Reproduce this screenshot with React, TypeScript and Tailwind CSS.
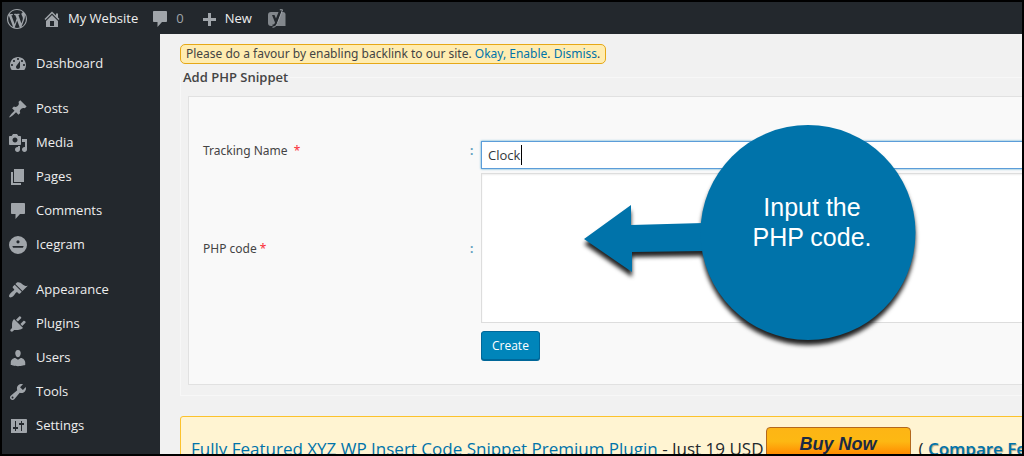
import { useState } from "react";
import type { ReactNode } from "react";

const icons = {
  wordpress:
    "M20 10c0-5.51-4.49-10-10-10C4.48 0 0 4.49 0 10c0 5.52 4.48 10 10 10 5.51 0 10-4.48 10-10zM7.78 15.37L4.37 6.22c.55-.02 1.17-.08 1.17-.08.5-.06.44-1.13-.06-1.11 0 0-1.45.11-2.37.11-.18 0-.37 0-.58-.01C4.12 2.69 6.87 1.11 10 1.11c2.33 0 4.45.87 6.05 2.34-.68-.11-1.65.39-1.65 1.58 0 .74.45 1.36.9 2.1.35.61.55 1.36.55 2.46 0 1.49-1.4 5-1.4 5l-3.03-8.37c.54-.02.82-.17.82-.17.5-.05.44-1.25-.06-1.22 0 0-1.44.12-2.38.12-.87 0-2.33-.12-2.33-.12-.5-.03-.56 1.2-.06 1.22l.92.08 1.26 3.41zM17.41 10c.24-.64.74-1.87.43-4.25.7 1.29 1.05 2.71 1.05 4.25 0 3.29-1.73 6.24-4.4 7.78.97-2.59 1.94-5.2 2.92-7.78zM6.1 18.09C3.12 16.65 1.11 13.53 1.11 10c0-1.3.23-2.48.72-3.59C3.25 10.3 4.67 14.2 6.1 18.09zm4.03-6.63l2.58 6.98c-.86.29-1.76.45-2.71.45-.79 0-1.57-.11-2.29-.33.81-2.38 1.62-4.74 2.42-7.1z",
  home: "M16 8.5l1.53 1.53-1.06 1.06L10 4.6l-6.47 6.49-1.06-1.06L10 2.5l4 4v-2h2v4zm-6-2.46l6 5.99V18H4v-5.97zM12 17v-5H8v5h4z",
  comment:
    "M4 2h12c.55 0 1 .45 1 1v9c0 .55-.45 1-1 1h-4l-4.500 5v-5H4c-.55 0-1-.45-1-1V3c0-.55.45-1 1-1z",
  plus: "M17 9v3h-5v5H9v-5H4V9h5V4h3v5z",
  dashboard:
    "M3.76 16h12.48c1.1-1.37 1.76-3.11 1.76-5 0-4.42-3.58-8-8-8s-8 3.58-8 8c0 1.89.66 3.63 1.76 5zM10 4c.55 0 1 .45 1 1s-.45 1-1 1-1-.45-1-1 .45-1 1-1zM6 6c.55 0 1 .45 1 1s-.45 1-1 1-1-.45-1-1 .45-1 1-1zm8 0c.55 0 1 .45 1 1s-.45 1-1 1-1-.45-1-1 .45-1 1-1zm-5.37 5.55L12 7v6c0 1.1-.9 2-2 2s-2-.9-2-2c0-.57.24-1.08.63-1.45zM4 10c.55 0 1 .45 1 1s-.45 1-1 1-1-.45-1-1 .45-1 1-1zm12 0c.55 0 1 .45 1 1s-.45 1-1 1-1-.45-1-1 .45-1 1-1z",
  post: "M10.44 3.02l1.82-1.82 6.36 6.35-1.83 1.82c-1.05-.68-2.48-.57-3.41.36l-.75.75c-.92.93-1.04 2.35-.35 3.41l-1.83 1.82-2.41-2.41-2.8 2.79c-.42.42-3.38 2.71-3.8 2.29s1.86-3.39 2.28-3.81l2.79-2.79L4.1 9.36l1.83-1.82c1.05.69 2.48.57 3.4-.36l.75-.75c.93-.92 1.05-2.35.36-3.41z",
  media:
    "M13 11V4c0-.55-.45-1-1-1h-1.67L9 1H5L3.67 3H2c-.55 0-1 .45-1 1v7c0 .55.45 1 1 1h10c.55 0 1-.45 1-1zM7 4.5c1.38 0 2.5 1.12 2.5 2.5S8.38 9.5 7 9.5 4.5 8.38 4.5 7 5.62 4.5 7 4.5zM14 6h5v10.5c0 1.38-1.12 2.5-2.5 2.5S14 17.88 14 16.5s1.12-2.5 2.5-2.5c.17 0 .34.02.5.05V9h-3V6zm-4 8.05V13h2v3.5c0 1.38-1.12 2.5-2.5 2.5S7 17.88 7 16.5 8.12 14 9.5 14c.17 0 .34.02.5.05z",
  page: "M6 15V2h10v13H6zm-1 1h8v2H3V5h2v11z",
  icegram:
    "M10 1a9 9 0 1 0 0 18 9 9 0 0 0 0-18zM10 5.2a1.6 1.6 0 1 1 0 3.2 1.6 1.6 0 0 1 0-3.2zM4.500 11h11c0 1.100-.5 1.800-1.200 1.800H5.700c-.7 0-1.200-.7-1.200-1.800z",
  appearance:
    "M14.48 11.06L7.41 3.99l1.5-1.5c.5-.56 2.3-.47 3.51.32 1.21.8 1.43 1.28 2.91 2.1 1.18.64 2.45 1.26 4.45.85zm-.71.71L6.7 4.7 4.93 6.47c-.39.39-.39 1.02 0 1.41l1.06 1.06c.39.39.39 1.03 0 1.42-.6.6-1.43 1.11-2.21 1.69-.35.26-.7.53-1.01.84C1.43 14.23.4 16.08 1.4 17.07c.99 1 2.84-.03 4.18-1.36.31-.31.58-.66.85-1.02.57-.78 1.08-1.61 1.69-2.21.39-.39 1.02-.39 1.41 0l1.06 1.06c.39.39 1.02.39 1.41 0z",
  plugins:
    "M13.11 4.36L9.87 7.6 8 5.73l3.24-3.24c.35-.34 1.05-.2 1.56.32.52.51.66 1.21.31 1.55zm-8 1.77l.91-1.12 9.01 9.01-1.19.84c-.71.71-2.63 1.16-3.82 1.16H6.14L4.9 17.26c-.59.59-1.54.59-2.12 0-.59-.58-.59-1.53 0-2.12l1.24-1.24v-3.88c0-1.13.4-3.19 1.09-3.89zm7.26 3.97l3.24-3.24c.34-.35 1.04-.21 1.55.31.52.51.66 1.21.31 1.55l-3.24 3.25z",
  users:
    "M10 9.25c-2.27 0-2.73-3.44-2.73-3.44C7 4.02 7.82 2 9.97 2c2.16 0 2.98 2.02 2.71 3.81 0 0-.41 3.44-2.68 3.44zm0 2.57L12.72 10c2.39 0 4.52 2.33 4.52 4.53v2.49s-3.65 1.13-7.24 1.13c-3.65 0-7.24-1.13-7.24-1.13v-2.49c0-2.25 1.94-4.48 4.47-4.48z",
  tools:
    "M16.68 9.77c-1.34 1.34-3.3 1.67-4.95.99l-5.41 6.52c-.99.99-2.59.99-3.58 0s-.99-2.59 0-3.57l6.52-5.42c-.68-1.65-.35-3.61.99-4.95 1.28-1.28 3.12-1.62 4.72-1.06l-2.89 2.89 2.82 2.82 2.86-2.87c.53 1.58.18 3.39-1.08 4.65zM3.81 16.21c.4.39 1.04.39 1.43 0 .4-.4.4-1.04 0-1.43-.39-.4-1.03-.4-1.43 0-.39.39-.39 1.03 0 1.43z",
  settings:
    "M3 3h15c.55 0 1 .45 1 1v12c0 .55-.45 1-1 1H3V3zM7 5v6H5v2h2v2h1v-2h2v-2H8V5H7zM13 5v2h-2v2h2v6h1V9h2V7h-2V5h-1z",
};

type IconName = keyof typeof icons;

const menuGroups: { label: string; icon: IconName }[][] = [
  [{ label: "Dashboard", icon: "dashboard" }],
  [
    { label: "Posts", icon: "post" },
    { label: "Media", icon: "media" },
    { label: "Pages", icon: "page" },
    { label: "Comments", icon: "comment" },
    { label: "Icegram", icon: "icegram" },
  ],
  [
    { label: "Appearance", icon: "appearance" },
    { label: "Plugins", icon: "plugins" },
    { label: "Users", icon: "users" },
    { label: "Tools", icon: "tools" },
    { label: "Settings", icon: "settings" },
  ],
];

function Icon({ name }: { name: IconName }) {
  return (
    <svg viewBox="0 0 20 20" className="size-5 shrink-0 fill-[#a0a5aa]" fillRule="evenodd" aria-hidden="true">
      <path d={icons[name]} />
    </svg>
  );
}

function YoastIcon() {
  return (
    <svg viewBox="0 0 20 20" className="size-5 shrink-0" aria-hidden="true">
      <path d="M4 3h12a2.500 2.500 0 0 1 2.500 2.500V17H4a3 3 0 0 1-3-3V6a3 3 0 0 1 3-3z" fill="#82878c" />
      <path d="M15.500 .5h-3L9 9.500 7.500 6H5l3 7.500c-.4 1.400-1 2-2.500 2v2.500c2.800 0 4-1.200 5-3.800z" fill="#23282d" />
      <path d="M12.800 .8h2.700L10.300 14.500c-1 2.500-2.200 3.600-4.800 3.700" fill="none" stroke="#a0a5aa" strokeWidth="1" />
    </svg>
  );
}

function AdminBar() {
  return (
    <header className="flex h-8 shrink-0 items-center bg-[#23282d] pt-px pl-[5px] text-[13px] text-[#eee]">
      <a href="#wp" aria-label="About WordPress">
        <Icon name="wordpress" />
      </a>
      <a href="#site" className="ml-[15px] flex items-center gap-[6px]">
        <Icon name="home" />
        My Website
      </a>
      <a href="#comments" className="ml-3 flex items-center gap-[6px] text-[#a0a5aa]">
        <Icon name="comment" />
        0
      </a>
      <a href="#new" className="ml-[15px] flex items-center gap-[6px]">
        <Icon name="plus" />
        New
      </a>
      <a href="#seo" aria-label="SEO" className="ml-[15px]">
        <YoastIcon />
      </a>
    </header>
  );
}

function Sidebar() {
  return (
    <nav aria-label="Main menu" className="flex w-[158px] shrink-0 flex-col gap-[11px] bg-[#23282d] pt-[13px]">
      {menuGroups.map((group) => (
        <ul key={group[0].label}>
          {group.map((item) => (
            <li key={item.label}>
              <a href="#menu" className="flex h-[34px] items-center gap-2 pl-[6px] text-[13px] text-[#eee]">
                <Icon name={item.icon} />
                {item.label}
              </a>
            </li>
          ))}
        </ul>
      ))}
    </nav>
  );
}

function Row({ id, label, children }: { id: string; label: ReactNode; children: ReactNode }) {
  return (
    <>
      <label htmlFor={id} className="pt-0.5 leading-4 whitespace-pre">
        {label}
      </label>
      <span className="pt-0.5 leading-4 font-bold text-[#5f9fc0]">:</span>
      {children}
    </>
  );
}

function Callout() {
  return (
    <div className="pointer-events-none absolute top-7 left-[394px] h-[215px] w-[333px]">
      <svg
        viewBox="0 0 333 215"
        className="absolute inset-0 size-full overflow-visible fill-[#0073aa] drop-shadow-[0_5px_2px_#000000dd]"
        aria-hidden="true"
      >
        <path d="M1 114L48 80v20l72-2v28l-71 1v20z" />
        <circle cx="225" cy="107.500" r="107.500" />
      </svg>
      <p className="absolute top-[67px] right-0 w-[208px] text-center font-['Liberation_Sans',sans-serif] text-[25px] leading-[30px] text-white">
        Input the
        <br />
        PHP code.
      </p>
    </div>
  );
}

function SnippetForm() {
  const [name, setName] = useState("Clock");
  const [code, setCode] = useState("");

  return (
    <form onSubmit={(e) => e.preventDefault()}>
      <fieldset className="border border-[#f7f7f7] pt-[9px] pb-[10px]">
        <legend className="px-0.5 font-['Open_Sans',sans-serif] text-[13px] leading-5 font-semibold">
          Add PHP Snippet
        </legend>
        <div className="relative ml-[7px] border border-[#e1e1e1] bg-[#f9f9f9] pt-[44px] pb-6 pl-[14px]">
          <div className="grid grid-cols-[267px_11px_1fr] items-start">
            <Row
              id="tracking-name"
              label={
                <>
                  Tracking Name {" "}<span className="text-red-500">*</span>
                </>
              }
            >
              <div className="relative">
                <input
                  id="tracking-name"
                  type="text"
                  value={name}
                  onChange={(e) => setName(e.target.value)}
                  className="block h-7 w-full border border-[#5b9dd9] bg-white px-[6px] font-['Open_Sans',sans-serif] text-[13px] text-[#32373c] shadow-[0_0_2px_#1e8cbecc] outline-none"
                />
                {/* text cursor */}
                <span className="absolute top-1 left-10 h-5 w-px bg-black" />
              </div>
            </Row>
          </div>
          <div className="mt-1 grid grid-cols-[267px_11px_1fr] items-center">
            <Row
              id="php-code"
              label={
                <>
                  PHP code <span className="text-red-500">*</span>
                </>
              }
            >
              <textarea
                id="php-code"
                value={code}
                onChange={(e) => setCode(e.target.value)}
                className="block h-[150px] resize-none border border-[#ddd] bg-white p-[6px] shadow-[inset_0_1px_2px_#00000012] outline-none"
              />
            </Row>
          </div>
          <button
            type="submit"
            className="mt-2 ml-[278px] block h-[29px] rounded-[3px] border border-[#006799] bg-[#0085ba] px-[10px] font-['Open_Sans',sans-serif] font-medium text-white shadow-[0_1px_0_#006799]"
          >
            Create
          </button>
          <Callout />
        </div>
      </fieldset>
    </form>
  );
}

function PremiumBanner() {
  return (
    <section className="mt-5 flex h-20 items-start rounded-[3px] border border-[#fcc22c] bg-[#fff4d2] pt-[10px] pl-[10px] font-['Open_Sans',sans-serif] text-[17px] whitespace-nowrap text-[#23282d]">
      <p className="pt-[10px] leading-6">
        <a href="#premium" className="text-[#0073aa]">
          Fully Featured XYZ WP Insert Code Snippet Premium Plugin
        </a>{" "}
        - Just 19 USD
      </p>
      <button
        type="button"
        className="ml-0.5 h-10 w-[145px] shrink-0 rounded-[4px] border border-[#b3681d] bg-linear-to-b from-[#fdb515] via-[#fdb813] via-35% to-[#ff8a00] to-70% pb-[6px] font-['Liberation_Sans',sans-serif] text-[18px] font-bold text-[#1b2a44] italic"
      >
        Buy Now
      </button>
      <p className="pt-[10px] pl-2 leading-6">
        ({" "}
        <a href="#compare" className="font-semibold text-[#0073aa] [text-shadow:1px_1px_1px_#00000055]">
          Compare Features
        </a>{" "}
        )
      </p>
    </section>
  );
}

export default function App() {
  return (
    <div className="flex h-screen flex-col overflow-hidden border-2 border-black bg-[#f1f1f1] font-['Noto_Sans',sans-serif] text-[12px] text-[#444]">
      <div className="shrink-0 font-['Open_Sans',sans-serif]">
        <AdminBar />
      </div>
      <div className="flex min-h-0 flex-1">
        <div className="flex shrink-0 font-['Open_Sans',sans-serif]">
          <Sidebar />
        </div>
        <main className="min-w-0 flex-1 overflow-hidden pt-[10px] pl-5">
          <div className="-mr-4">
            <p className="mb-[3px] inline-block rounded-[5px] border border-[#e6a817] bg-[#ffecb0] px-[5px] align-top leading-[18px]">
              Please do a favour by enabling backlink to our site.{" "}
              <a href="#okay" className="text-[#0073aa]">
                Okay, Enable
              </a>
              .{" "}
              <a href="#dismiss" className="text-[#0073aa]">
                Dismiss
              </a>
              .
            </p>
            <SnippetForm />
            <PremiumBanner />
          </div>
        </main>
      </div>
    </div>
  );
}
